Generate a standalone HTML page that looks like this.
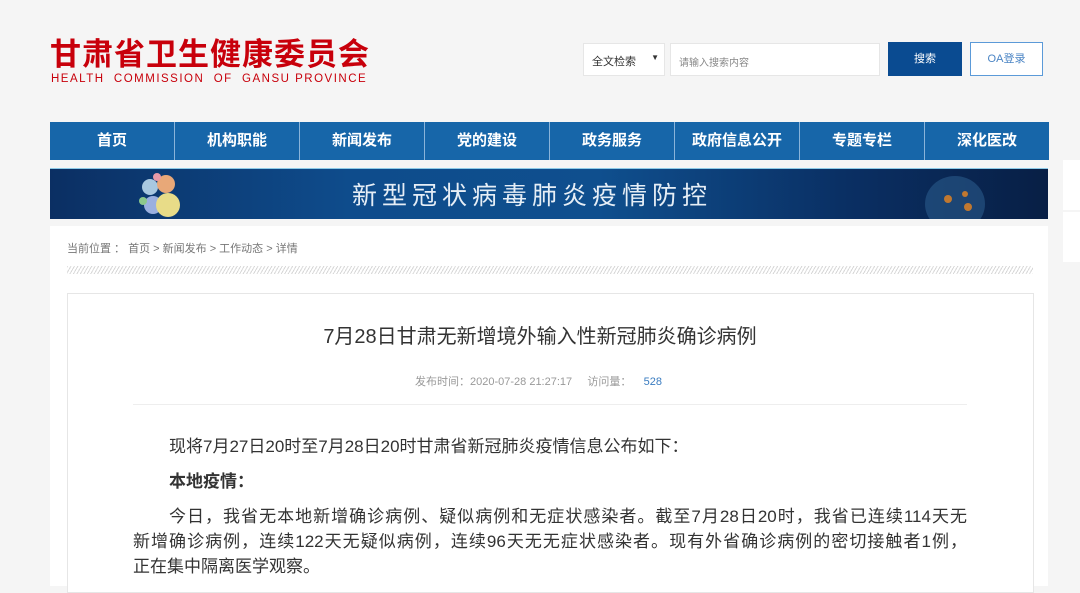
<!DOCTYPE html>
<html><head><meta charset="utf-8"><style>
*{margin:0;padding:0;box-sizing:border-box}
body{width:1080px;height:578px;overflow:hidden;background:#f5f5f5;font-family:"Liberation Sans","Noto Sans CJK SC",sans-serif;position:relative}
.abs{position:absolute}
.logo{left:50px;top:34px;font-size:31px;font-weight:bold;color:#c8000b;letter-spacing:1px;line-height:36px;font-family:"Noto Sans CJK SC",sans-serif}
.en{left:51px;top:73px;font-size:11.5px;color:#c8000b;letter-spacing:1.5px;white-space:pre}
.sel{left:583px;top:43px;width:82px;height:33px;background:#fff;border:1px solid #e6e6e6;font-size:11px;color:#333;padding:9px 0 0 8px}
.sel span{position:absolute;right:5px;top:9px;font-size:8px}
.inp{left:670px;top:43px;width:210px;height:33px;background:#fff;border:1px solid #e6e6e6;font-size:10px;color:#888;padding:10px 0 0 8px}
.btn{left:888px;top:42px;width:74px;height:34px;background:#0a4b91;color:#fff;font-size:11px;text-align:center;line-height:34px}
.oa{left:970px;top:42px;width:73px;height:34px;border:1px solid #5b9ad8;background:#fff;color:#4a84c4;font-size:11px;text-align:center;line-height:32px}
.nav{left:50px;top:122px;width:999px;height:38px;display:flex;background:#1766a9}
.nav div{flex:1;color:#fff;font-weight:bold;font-size:15px;text-align:center;line-height:38px;border-left:1px solid #8ab4da}
.nav div:first-child{border-left:none}
.ban{left:50px;top:168px;width:998px;height:51px;background:linear-gradient(90deg,#0b2f63 0%,#0e4c8c 30%,#0f4f8e 55%,#0a2f63 80%,#081f45 100%);border-top:1px solid #8ecbe8}
.ban .t{position:absolute;left:302px;top:7px;color:#e6eef6;font-size:25px;letter-spacing:5px}
.panel{left:50px;top:226px;width:998px;height:360px;background:#fff}
.crumb{left:67px;top:240px;font-size:11px;color:#777}
.hatch{left:67px;top:266px;width:966px;height:8px;background:repeating-linear-gradient(120deg,#d8d8d8 0 1px,#fff 1px 3px)}
.box{left:67px;top:293px;width:967px;height:300px;border:1px solid #e6e6e6;background:#fff}
.title{left:0;width:1080px;top:320px;text-align:center;font-size:20px;color:#333}
.meta{left:415px;top:373px;font-size:11px;color:#999;white-space:pre}
.meta b{font-weight:normal;color:#3a7cc0}
.hr{left:133px;top:404px;width:834px;height:1px;background:#eee}
.txt{left:133px;width:834px;font-size:17px;color:#333;line-height:25px;white-space:nowrap}
.j{text-align:justify;text-align-last:justify;white-space:normal}
.side{left:1063px;width:20px;background:#fff}
</style></head><body>
<div class="abs logo">甘肃省卫生健康委员会</div>
<div class="abs en">HEALTH  COMMISSION  OF  GANSU PROVINCE</div>
<div class="abs sel">全文检索<span>▼</span></div>
<div class="abs inp">请输入搜索内容</div>
<div class="abs btn">搜索</div>
<div class="abs oa">OA登录</div>
<div class="abs nav"><div>首页</div><div>机构职能</div><div>新闻发布</div><div>党的建设</div><div>政务服务</div><div>政府信息公开</div><div>专题专栏</div><div>深化医改</div></div>
<div class="abs ban">
<svg style="position:absolute;left:85px;top:2px" width="50" height="48"><circle cx="15" cy="16" r="8" fill="#a8c8e0"/><circle cx="31" cy="13" r="9" fill="#e8a878"/><circle cx="22" cy="6" r="4" fill="#e89aa8"/><circle cx="18" cy="34" r="9" fill="#9ab0e0"/><circle cx="33" cy="34" r="12" fill="#e8dc88"/><circle cx="8" cy="30" r="4" fill="#8cc88c"/></svg>
<div class="t">新型冠状病毒肺炎疫情防控</div>
<svg style="position:absolute;left:870px;top:0" width="70" height="50"><ellipse cx="35" cy="35" rx="30" ry="28" fill="#2a5a8a" opacity=".6"/><circle cx="28" cy="30" r="4" fill="#c07830"/><circle cx="45" cy="25" r="3" fill="#c07830"/><circle cx="48" cy="38" r="4" fill="#c07830"/></svg>
</div>
<div class="abs panel"></div>
<div class="abs crumb">当前位置 ： 首页 &gt; 新闻发布 &gt; 工作动态 &gt; 详情</div>
<div class="abs hatch"></div>
<div class="abs box"></div>
<div class="abs title">7月28日甘肃无新增境外输入性新冠肺炎确诊病例</div>
<div class="abs meta">发布时间：2020-07-28 21:27:17     访问量：    <b>528</b></div>
<div class="abs hr"></div>
<div class="abs txt" style="top:434px;text-indent:36px">现将7月27日20时至7月28日20时甘肃省新冠肺炎疫情信息公布如下：</div>
<div class="abs txt" style="top:469px;text-indent:36px;font-weight:bold">本地疫情：</div>
<div class="abs txt j" style="top:504px;text-indent:36px;height:25px;overflow:hidden">今日，我省无本地新增确诊病例、疑似病例和无症状感染者。截至7月28日20时，我省已连续114天无</div>
<div class="abs txt j" style="top:529px;height:25px;overflow:hidden">新增确诊病例，连续122天无疑似病例，连续96天无无症状感染者。现有外省确诊病例的密切接触者1例，</div>
<div class="abs txt" style="top:554px">正在集中隔离医学观察。</div>
<div class="abs side" style="top:160px;height:50px"></div>
<div class="abs side" style="top:212px;height:50px"></div>
</body></html>
